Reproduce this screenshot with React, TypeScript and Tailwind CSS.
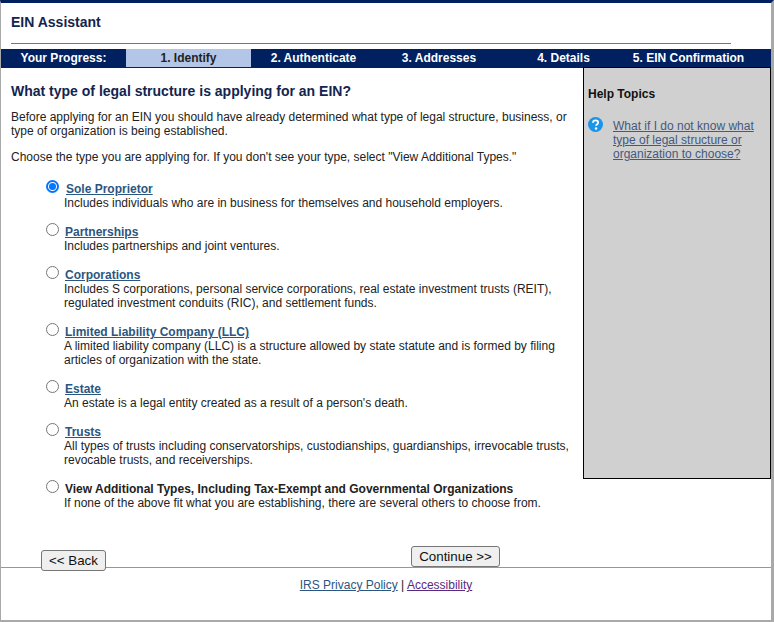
const steps = [
  { label: '1. Identify', width: 'w-[125px]', active: true },
  { label: '2. Authenticate', width: 'w-[125px]', active: false },
  { label: '3. Addresses', width: 'w-[126px]', active: false },
  { label: '4. Details', width: 'w-[123px]', active: false },
  { label: '5. EIN Confirmation', width: 'w-[127px]', active: false },
];

const options = [
  {
    title: 'Sole Proprietor',
    desc: ['Includes individuals who are in business for themselves and household employers.'],
    checked: true,
  },
  { title: 'Partnerships', desc: ['Includes partnerships and joint ventures.'] },
  {
    title: 'Corporations',
    desc: [
      'Includes S corporations, personal service corporations, real estate investment trusts (REIT),',
      'regulated investment conduits (RIC), and settlement funds.',
    ],
  },
  {
    title: 'Limited Liability Company (LLC)',
    desc: [
      'A limited liability company (LLC) is a structure allowed by state statute and is formed by filing',
      'articles of organization with the state.',
    ],
  },
  { title: 'Estate', desc: ["An estate is a legal entity created as a result of a person's death."] },
  {
    title: 'Trusts',
    desc: [
      'All types of trusts including conservatorships, custodianships, guardianships, irrevocable trusts,',
      'revocable trusts, and receiverships.',
    ],
  },
  {
    title: 'View Additional Types, Including Tax-Exempt and Governmental Organizations',
    desc: ['If none of the above fit what you are establishing, there are several others to choose from.'],
    plain: true,
  },
];

function Radio({ checked }: { checked?: boolean }) {
  if (checked) {
    return (
      <span className="mt-[1px] flex h-[13px] w-[13px] items-center justify-center rounded-full border-2 border-[#0075ff] bg-white">
        <span className="h-[7px] w-[7px] rounded-full bg-[#0075ff]" />
      </span>
    );
  }
  return <span className="mt-[1px] block h-[13px] w-[13px] rounded-full border border-[#767676] bg-white" />;
}

export default function App() {
  return (
    <div className="h-[622px] w-[774px] overflow-hidden bg-white font-['Liberation_Sans',Arial,sans-serif] text-[12px] leading-[14px] text-[#222]">
      <div className="flex h-[620px] flex-col border-t-[3px] border-r-[3px] border-l border-t-[#002060] border-r-[#a9a9a9] border-l-[#a9a9a9]">
        <div className="h-[46px] px-[10px] pt-[11px]">
          <h1 className="h-[29px] text-[14px] leading-[16px] font-bold text-[#12244f]">EIN Assistant</h1>
          <div className="h-px w-[720px] bg-[#777]" />
        </div>

        <div className="flex h-[19px] bg-[#002060] text-[12px] leading-[18px] font-bold text-white">
          <div className="w-[125px] text-center">Your Progress:</div>
          {steps.map((step) => (
            <div
              key={step.label}
              className={`${step.width} text-center ${step.active ? 'mb-px bg-[#b4c6e7] text-[#222]' : ''}`}
            >
              {step.label}
            </div>
          ))}
        </div>

        <div className="flex h-[411px]">
          <main className="w-[582px] px-[10px] pt-[15px]">
            <h2 className="text-[14px] leading-[16px] font-bold text-[#12244f]">
              What type of legal structure is applying for an EIN?
            </h2>
            <p className="mt-[11px]">
              Before applying for an EIN you should have already determined what type of legal structure, business, or
              <br />
              type of organization is being established.
            </p>
            <p className="mt-[12px]">
              Choose the type you are applying for. If you don't see your type, select "View Additional Types."
            </p>

            <div className="mt-[15px] flex flex-col gap-[12px] pl-[35px]">
              {options.map((option) => (
                <div key={option.title} className="flex items-start">
                  <div className="w-[19px] shrink-0">
                    <Radio checked={option.checked} />
                  </div>
                  <div className="pt-[3px]">
                    <div className={`font-bold ${option.checked ? 'pl-px' : ''}`}>
                      {option.plain ? (
                        <span>{option.title}</span>
                      ) : (
                        <a href="#" className="text-[#2b5680] underline">
                          {option.title}
                        </a>
                      )}
                    </div>
                    {option.desc.map((line) => (
                      <div key={line} className="-ml-px">
                        {line}
                      </div>
                    ))}
                  </div>
                </div>
              ))}
            </div>
          </main>

          <aside className="h-[412px] w-[188px] -translate-y-px border border-black bg-[#d0d0d0] px-[4px] pt-[19px]">
            <h3 className="font-bold text-[#111]">Help Topics</h3>
            <div className="mt-[17px] flex">
              <svg viewBox="0 0 16 16" className="-mt-px h-[15px] w-[15px] shrink-0">
                <circle cx="8" cy="8" r="8" fill="#1b95e8" />
                <path
                  d="M5.3 6.1c.1-1.6 1.2-2.5 2.8-2.5s2.7.9 2.7 2.2c0 1.1-.6 1.6-1.3 2.1-.6.4-.9.7-.9 1.4"
                  fill="none"
                  stroke="#fff"
                  strokeWidth="2"
                />
                <circle cx="8.6" cy="12.3" r="1.3" fill="#fff" />
              </svg>
              <a href="#" className="ml-[10px] pt-px text-[#44597f] underline">
                What if I do not know what
                <br />
                type of legal structure or
                <br />
                organization to choose?
              </a>
            </div>
          </aside>
        </div>

        <div className="relative z-10 flex h-[88px] items-start pl-[40px]">
          <button className="mt-[71px] h-[21px] w-[65px] rounded-[3px] border border-[#767676] bg-[#efefef] text-[13.33px] text-[#111]">
            {'<< Back'}
          </button>
          <button className="mt-[67px] ml-[305px] h-[21px] w-[89px] rounded-[3px] border border-[#767676] bg-[#efefef] text-[13.33px] text-[#111]">
            {'Continue >>'}
          </button>
        </div>

        <footer className="flex-1 border-t border-[#8a9aaa] pt-[10px] text-center">
          <a href="#" className="text-[#2b5680] underline">
            IRS Privacy Policy
          </a>{' '}
          | <a href="#" className="text-[#5a2a82] underline">Accessibility</a>
        </footer>
      </div>
      <div className="h-[2px] bg-[#a9a9a9]" />
    </div>
  );
}
